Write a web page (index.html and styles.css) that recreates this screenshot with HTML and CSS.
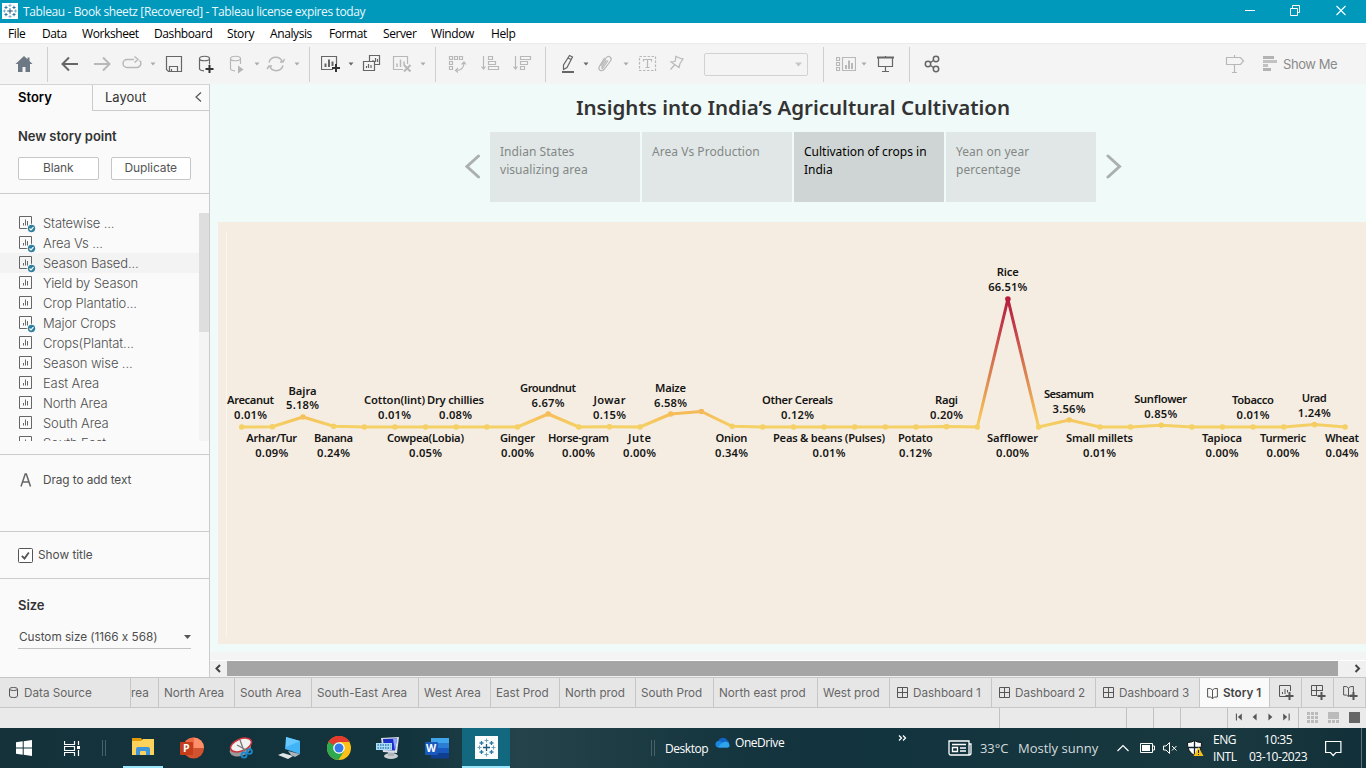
FILE: index.html
```html
<!DOCTYPE html>
<html lang="en">
<head>
<meta charset="utf-8">
<title>Tableau - Book sheetz</title>
<link rel="stylesheet" href="styles.css">
</head>
<body>
<svg class="defs" width="0" height="0">
  <defs>
    <g id="sheet"><path d="M.5.5h12v12H.5z" fill="none" stroke="#666" /><path d="M4.5 9.5V7M6.5 9.500V3.500M8.500 9.500V5" stroke="#666" fill="none"/></g>
    <g id="used"><circle cx="12.500" cy="12.500" r="4.200" fill="#2f7f9f" stroke="#fafafa"/><path d="M10.500 12.500l1.500 1.500 2.500-2.800" fill="none" stroke="#fff" stroke-width="1.200"/></g>
    <g id="dash"><path d="M.5.5h10v10H.5zM5.500.5v10M.5 5.500h10" fill="none" stroke="#555"/></g>
    <g id="book"><path d="M.6 1.500Q4 1 5.500 3 7 1 10.400 1.500V10Q7 9.500 5.500 11.500 4 9.500.6 10zM5.500 3v8.500" fill="none" stroke="#555"/></g>
    <path id="plus" d="M10.500 7v8M6.500 11h8" stroke="#555" stroke-width="2" fill="none"/>
    <g id="logo" fill="none" stroke-width="1.300">
      <path d="M10 6.500v7M6.500 10h7" stroke="#1f5a7c"/>
      <path d="M10 1v4M8 3h4M10 15v4M8 17h4M1 10h4M3 8v4M15 10h4M17 8v4" stroke="#6aa3bf" stroke-width="1"/>
      <path d="M5 3.500v4M3 5.500h4M15 3.500v4M13 5.500h4M5 12.500v4M3 14.500h4M15 12.500v4M13 14.500h4" stroke="#2c7ba5"/>
    </g>
  </defs>
</svg>

<header class="titlebar">
  <svg class="app-icon" width="16" height="16" viewBox="0 0 20 20"><path d="M0 0h20v20H0z" fill="#fff"/><use href="#logo"/></svg>
  <span>Tableau - Book sheetz [Recovered] - Tableau license expires today</span>
  <div class="win-buttons">
    <svg width="10" height="11" viewBox="0 0 10 11"><path d="M0 5.500h10" stroke="#fff"/></svg>
    <svg width="10" height="11" viewBox="0 0 10 11"><path d="M.5 3.500h7v7h-7zM2.500 3V.5h7v7H8" fill="none" stroke="#fff"/></svg>
    <svg width="10" height="11" viewBox="0 0 10 11"><path d="M.5 1l9 9M9.500 1l-9 9" stroke="#fff" stroke-width="1.100"/></svg>
  </div>
</header>

<nav class="menubar">
  <span class="m-file">File</span><span class="m-data">Data</span><span class="m-work">Worksheet</span><span class="m-dash">Dashboard</span><span class="m-story">Story</span><span class="m-ana">Analysis</span><span class="m-form">Format</span><span class="m-serv">Server</span><span class="m-wind">Window</span><span>Help</span>
</nav>

<div class="toolbar">
  <svg class="tool g14" viewBox="0 0 20 20"><path d="M10 2L1.500 10H4v8h4.500v-5h3v5H16v-8h2.500L15.500 7V3.500h-2v1.700z" fill="#6d7885"/></svg>
  <i class="sep g13"></i>
  <svg class="tool g12" viewBox="0 0 20 20"><path d="M18 10H3M9 3.500L2.500 10 9 16.500" class="dk w2"/></svg>
  <svg class="tool g12" viewBox="0 0 20 20"><path d="M2 10h15M11 3.500l6.500 6.500-6.500 6.500" class="lt w2"/></svg>
  <svg class="tool g10" viewBox="0 0 20 20"><path d="M12 5.500H5a4 4 0 0 0 0 8h10a4 4 0 0 0 2.500-7M12.500 2.500l3.500 3-3.500 3" class="lt w15"/></svg>
  <svg class="caret g8" viewBox="0 0 6 4"><path d="M.5.5h5L3 3.500z" fill="#aaa"/></svg>
  <svg class="tool g8" viewBox="0 0 20 20"><path d="M2.500 2.500h15v15H4.500l-2-2zM5.500 17v-4.500h8V17M7.500 17v-2" class="dk w12"/></svg>
  <svg class="tool g12" viewBox="0 0 20 20"><path d="M3.500 4.500v10q0 2 4.500 2.300M13.500 4.500V10.500M3.500 4.500c0-3 10-3 10 0s-10 3-10 0" class="dk w12"/><path d="M13.500 11v8M9.500 15h8" stroke="#333" stroke-width="2"/></svg>
  <svg class="tool g11" viewBox="0 0 20 20"><path d="M3.500 4.500v10q0 2 4.500 2.300M13.500 4.500V10M3.500 4.500c0-3 10-3 10 0s-10 3-10 0" class="lt w12"/><path d="M11 11.500v8l5.500-4z" fill="#b5b5b5"/></svg>
  <svg class="caret g7" viewBox="0 0 6 4"><path d="M.5.5h5L3 3.500z" fill="#aaa"/></svg>
  <svg class="tool g6" viewBox="0 0 20 20"><path d="M3 8.500a7 7 0 0 1 13.500 0M17 11.500a7 7 0 0 1-13.500 0M14 8h3l1.500-3M6 12H3l-2 3" class="lt w15"/></svg>
  <svg class="caret g8" viewBox="0 0 6 4"><path d="M.5.5h5L3 3.500z" fill="#aaa"/></svg>
  <i class="sep g9"></i>
  <svg class="tool g11" viewBox="0 0 20 20"><path d="M12 15.500H.5v-13h15V10" class="dk w12"/><path d="M4.500 13V9.500M8 13V5.500M11.500 12V7.500" class="dk w2"/><path d="M15 10v8M11 14h8" stroke="#333" stroke-width="2"/></svg>
  <svg class="caret g7" viewBox="0 0 6 4"><path d="M.5.5h5L3 3.500z" fill="#666"/></svg>
  <svg class="tool g8" viewBox="0 0 20 20"><path d="M7.500 7.500V1.500h10v9h-5M11 8V6M13.500 8V4M15.500 8V5M1.500 7.500h11v9h-11zM4.500 14v-2M6.500 14v-4M9 14v-3" class="dk w12"/></svg>
  <svg class="tool g10" viewBox="0 0 20 20"><path d="M11 15.500H1.500v-13h14V10" class="lt w12"/><path d="M5 13V9.500M8.500 13V5.500M12 11V7.500" class="lt w15"/><path d="M12 11l6.500 6.500M18.500 11L12 17.500" class="lt w2"/></svg>
  <svg class="caret g8" viewBox="0 0 6 4"><path d="M.5.5h5L3 3.500z" fill="#aaa"/></svg>
  <i class="sep g9"></i>
  <svg class="tool g12" viewBox="0 0 20 20"><path d="M1.500 2.500h3v3h-3zM6.500 2.500h3v3h-3zM11.500 2.500h3v3h-3zM1.500 7.500h3v3h-3zM1.500 12.500h3v3h-3zM16 8.500q0 8-8 8M13.500 10.500L16 8l2 2.500M10 14l-2.500 2.500 2.500 2" class="lt w12"/></svg>
  <svg class="tool g12" viewBox="0 0 20 20"><path d="M3.500 2v13M1.500 12.500l2 2.500 2-2.500M8.500 2.500h4v3h-4zM8.500 7.500h7v3h-7zM8.500 12.500h10v3h-10z" class="lt w12"/></svg>
  <svg class="tool g12" viewBox="0 0 20 20"><path d="M3.500 2v13M1.500 12.500l2 2.500 2-2.500M8.500 2.500h10v3h-10zM8.500 7.500h7v3h-7zM8.500 12.500h4v3h-4z" class="lt w12"/></svg>
  <i class="sep g13"></i>
  <svg class="tool g12" viewBox="0 0 20 20"><path d="M11.500 1.500l3 1.500-5.500 10.500-3.500 2V11zM10 4l3 1.500" class="dk w12"/><path d="M4 18h12" class="dk w2"/></svg>
  <svg class="caret g5" viewBox="0 0 6 4"><path d="M.5.5h5L3 3.500z" fill="#666"/></svg>
  <svg class="tool g6" viewBox="0 0 20 20"><path d="M6 12l5-8q2-2.500 4-1t.5 4L9 15.500q-2 2-4 .7t-.5-4L9.500 4M11.500 6L7 13q-.5 1.500.7 1.500L13 6.500" class="lt w12"/></svg>
  <svg class="caret g8" viewBox="0 0 6 4"><path d="M.5.5h5L3 3.500z" fill="#aaa"/></svg>
  <svg class="tool g9" viewBox="0 0 20 20"><path d="M1.500 2.500h16v14h-16z" class="lt w12" stroke-dasharray="2.500 1.500"/><path d="M5.500 7.500v-2h8v2M9.500 5.500v8M7.500 13.500h4" class="lt w12"/></svg>
  <svg class="tool g9" viewBox="0 0 20 20"><path d="M8 2.500l7 3M9 3.500L8 8l-4 .5 8 5.500 1-4 3-4.500-1-.5M7.500 11.500L3.500 16" class="lt w12" transform="translate(0 -.5)"/></svg>
  <div class="combo g17"><svg width="7" height="5" viewBox="0 0 7 5"><path d="M0 .5h7l-3.500 4z" fill="#c6c6c6"/></svg></div>
  <i class="sep g15"></i>
  <svg class="tool g12" viewBox="0 0 20 20"><path d="M.5 3.500h3v3h-3zM.5 8.500h3v3h-3zM.5 13.500h3v3h-3zM6.500 3.500h13v13h-13z" class="lt w12"/><path d="M10 15v-4M13 15V6.500M16 15V9" class="lt w2"/></svg>
  <svg class="caret g5" viewBox="0 0 6 4"><path d="M.5.5h5L3 3.500z" fill="#aaa"/></svg>
  <svg class="tool g9" viewBox="0 0 20 20"><path d="M1 3.500h17" class="dk w2"/><path d="M2.500 3.500v9h14v-9M9.500 12.500V17M6 17.500h7M9.500 2v1" class="dk w12"/></svg>
  <i class="sep g13"></i>
  <svg class="tool g12" viewBox="0 0 20 20"><circle cx="6" cy="10" r="2.700" class="dk w15"/><circle cx="14" cy="5" r="2.700" class="dk w15"/><circle cx="14" cy="15" r="2.700" class="dk w15"/><path d="M8.500 8.500l3-2M8.500 11.500l3 2" class="dk w15"/></svg>
  <svg class="tool push" viewBox="0 0 20 20"><path d="M1.500 3.500h14l3 3.500-3 3.500h-14zM9.500 1v2.500M9.500 10.500v8M7 18.500h5" class="lt w12"/></svg>
  <div class="showme"><svg width="15" height="16" viewBox="0 0 15 16"><path d="M0 0h11v3H0zM0 12h8v3H0z" fill="#b3b3b3"/><path d="M0 4h14v3H0zM0 8h5v3H0z" fill="#c2c2c2"/></svg><span>Show Me</span></div>
</div>

<main class="main">
  <aside class="side">
    <div class="tabs2"><b>Story</b><div class="lay"><span>Layout</span><svg width="7" height="10" viewBox="0 0 7 10"><path d="M6 .5L1 5l5 4.500" fill="none" stroke="#555" stroke-width="1.200"/></svg></div></div>
    <section class="newpoint">
      <h3>New story point</h3>
      <div class="btns"><button>Blank</button><button>Duplicate</button></div>
    </section>
    <section class="sheets">
      <ul>
        <li><svg class="si" viewBox="0 0 17 17"><use href="#sheet"/><use href="#used"/></svg>Statewise ...</li>
        <li><svg class="si" viewBox="0 0 17 17"><use href="#sheet"/><use href="#used"/></svg>Area Vs ...</li>
        <li class="hov"><svg class="si" viewBox="0 0 17 17"><use href="#sheet"/><use href="#used"/></svg>Season Based...</li>
        <li><svg class="si" viewBox="0 0 17 17"><use href="#sheet"/></svg>Yield by Season</li>
        <li><svg class="si" viewBox="0 0 17 17"><use href="#sheet"/></svg>Crop Plantatio...</li>
        <li><svg class="si" viewBox="0 0 17 17"><use href="#sheet"/><use href="#used"/></svg>Major Crops</li>
        <li><svg class="si" viewBox="0 0 17 17"><use href="#sheet"/></svg>Crops(Plantat...</li>
        <li><svg class="si" viewBox="0 0 17 17"><use href="#sheet"/></svg>Season wise ...</li>
        <li><svg class="si" viewBox="0 0 17 17"><use href="#sheet"/></svg>East Area</li>
        <li><svg class="si" viewBox="0 0 17 17"><use href="#sheet"/></svg>North Area</li>
        <li><svg class="si" viewBox="0 0 17 17"><use href="#sheet"/></svg>South Area</li>
        <li><svg class="si" viewBox="0 0 17 17"><use href="#sheet"/></svg>South East...</li>
      </ul>
      <div class="vbar"><div class="vthumb"></div></div>
    </section>
    <section class="addtext"><svg width="13" height="14" viewBox="0 0 13 14"><path d="M1 13.500L5.200 1h1.100l4.200 12.500M2.500 9h6.500" fill="none" stroke="#666" stroke-width="1.500"/></svg><span>Drag to add text</span></section>
    <section class="showtitle"><svg width="15" height="15" viewBox="0 0 15 15"><rect x=".5" y=".5" width="14" height="14" rx="1" fill="#fff" stroke="#555"/><path d="M3.800 7.800l2.700 2.700 4.300-6" fill="none" stroke="#555" stroke-width="1.800"/></svg><span>Show title</span></section>
    <section class="size"><h3>Size</h3><div class="sel"><span>Custom size (1166 x 568)</span><svg width="7" height="4" viewBox="0 0 7 4"><path d="M0 0h7L3.500 4z" fill="#555"/></svg></div></section>
  </aside>

  <div class="work">
    <div class="story">
      <h1>Insights into India’s Agricultural Cultivation</h1>
      <div class="nav">
        <svg width="17" height="26" viewBox="0 0 17 26"><path d="M14.500 2L3 12.500l11.500 10.500" fill="none" stroke="#abb0af" stroke-width="3" stroke-linecap="round"/></svg>
        <div class="caps"><div>Indian States visualizing area</div><div>Area Vs Production</div><div class="on">Cultivation of crops in India</div><div>Yean on year percentage</div></div>
        <svg width="17" height="26" viewBox="0 0 17 26"><path d="M3 2l11.500 10.500L3 23" fill="none" stroke="#abb0af" stroke-width="3" stroke-linecap="round"/></svg>
      </div>
      <svg class="chart" width="1148" height="422" viewBox="218 222 1148 422">
        <defs><linearGradient id="heat" gradientUnits="userSpaceOnUse" x1="0" y1="427" x2="0" y2="299"><stop offset="0" stop-color="#f4d166"/><stop offset=".1" stop-color="#f6bd58"/><stop offset=".3" stop-color="#e29855"/><stop offset=".5" stop-color="#d57450"/><stop offset=".75" stop-color="#c4404a"/><stop offset="1" stop-color="#b71d3e"/></linearGradient>
        <marker id="dot" viewBox="-3 -3 6 6" markerUnits="userSpaceOnUse" markerWidth="6" markerHeight="6"><circle r="2.800" fill="context-stroke"/></marker></defs>
        <path d="M218 222h1148v422H218z" fill="#f6ede2"/>
        <path d="M226.500 232v405" stroke="#faf5ef"/>
        <path fill="none" stroke="url(#heat)" stroke-width="3" stroke-linejoin="round" marker-start="url(#dot)" marker-mid="url(#dot)" marker-end="url(#dot)" d="M241.700 427L272.300 426.800 303 417 333.600 426.300 364.300 427 394.900 427 425.600 427 456.200 427 486.900 427 517.500 427 548.200 414 578.800 427 609.500 426.700 640.100 427 670.800 414 701.400 411.500 732.100 426.300 762.700 427 793.400 427 824 427 854.700 427 885.300 427 916 427 946.600 426.600 977.300 427 1007.900 299 1038.600 427 1069.200 420 1099.900 427 1130.500 427 1161.200 425.300 1191.800 427 1222.500 427 1253.100 427 1283.800 427 1314.400 424.600 1345.100 427"/>
        <g class="lab">
          <text x="250.500" y="404" textLength="47">Arecanut</text><text x="250.500" y="419" textLength="33">0.01%</text>
          <text x="271.700" y="442" textLength="51">Arhar/Tur</text><text x="271.700" y="457" textLength="33">0.09%</text>
          <text x="302.500" y="394.500" textLength="28">Bajra</text><text x="302.500" y="409" textLength="33">5.18%</text>
          <text x="333.500" y="442" textLength="39">Banana</text><text x="333.500" y="457" textLength="33">0.24%</text>
          <text x="394.500" y="404" textLength="61">Cotton(lint)</text><text x="394.500" y="419" textLength="33">0.01%</text>
          <text x="425.500" y="442" textLength="77">Cowpea(Lobia)</text><text x="425.500" y="457" textLength="33">0.05%</text>
          <text x="455.500" y="404" textLength="57">Dry chillies</text><text x="455.500" y="419" textLength="33">0.08%</text>
          <text x="517.500" y="442" textLength="35">Ginger</text><text x="517.500" y="457" textLength="33">0.00%</text>
          <text x="548" y="392" textLength="56">Groundnut</text><text x="548" y="407" textLength="33">6.67%</text>
          <text x="578.500" y="442" textLength="61">Horse-gram</text><text x="578.500" y="457" textLength="33">0.00%</text>
          <text x="609.500" y="404" textLength="32">Jowar</text><text x="609.500" y="419" textLength="33">0.15%</text>
          <text x="639.500" y="442" textLength="23">Jute</text><text x="639.500" y="457" textLength="33">0.00%</text>
          <text x="670.500" y="392" textLength="31">Maize</text><text x="670.500" y="407" textLength="33">6.58%</text>
          <text x="731.500" y="442" textLength="32">Onion</text><text x="731.500" y="457" textLength="33">0.34%</text>
          <text x="797.500" y="404" textLength="71">Other Cereals</text><text x="797.500" y="419" textLength="33">0.12%</text>
          <text x="829" y="442" textLength="112">Peas &amp; beans (Pulses)</text><text x="829" y="457" textLength="33">0.01%</text>
          <text x="915.500" y="442" textLength="35">Potato</text><text x="915.500" y="457" textLength="33">0.12%</text>
          <text x="946.500" y="404" textLength="23">Ragi</text><text x="946.500" y="419" textLength="33">0.20%</text>
          <text x="1007.700" y="276" textLength="22">Rice</text><text x="1007.700" y="291" textLength="39">66.51%</text>
          <text x="1012.500" y="442" textLength="51">Safflower</text><text x="1012.500" y="457" textLength="33">0.00%</text>
          <text x="1069" y="398" textLength="50">Sesamum</text><text x="1069" y="413" textLength="33">3.56%</text>
          <text x="1099.500" y="442" textLength="67">Small millets</text><text x="1099.500" y="457" textLength="33">0.01%</text>
          <text x="1160.700" y="403" textLength="53">Sunflower</text><text x="1160.700" y="418" textLength="33">0.85%</text>
          <text x="1222" y="442" textLength="40">Tapioca</text><text x="1222" y="457" textLength="33">0.00%</text>
          <text x="1253" y="404" textLength="42">Tobacco</text><text x="1253" y="419" textLength="33">0.01%</text>
          <text x="1283" y="442" textLength="46">Turmeric</text><text x="1283" y="457" textLength="33">0.00%</text>
          <text x="1314.300" y="402" textLength="25">Urad</text><text x="1314.300" y="417" textLength="33">1.24%</text>
          <text x="1342" y="442" textLength="34">Wheat</text><text x="1342" y="457" textLength="33">0.04%</text>
        </g>
      </svg>
    </div>
    <div class="hbar">
      <svg width="17" height="15" viewBox="0 0 17 15"><path d="M10 4L6.500 7.500 10 11" fill="none" stroke="#444" stroke-width="2"/></svg>
      <div class="hthumb"></div>
      <svg width="28" height="15" viewBox="0 0 28 15"><path d="M17.500 4L21 7.500 17.500 11" fill="none" stroke="#444" stroke-width="2"/></svg>
    </div>
  </div>
</main>

<nav class="sheettabs">
  <div class="t1"><svg width="9" height="11" viewBox="0 0 9 11"><path d="M.5 2v7c0 2 8 2 8 0V2M.5 2c0-2 8-2 8 0s-8 2-8 0" fill="none" stroke="#555"/></svg>Data Source</div>
  <div class="t2">rea</div><div class="t3">North Area</div><div class="t4">South Area</div><div class="t5">South-East Area</div><div class="t6">West Area</div><div class="t7">East Prod</div><div class="t8">North prod</div><div class="t9">South Prod</div><div class="t10">North east prod</div><div class="t11">West prod</div>
  <div class="t12"><svg class="ti" viewBox="0 0 11 12"><use href="#dash"/></svg>Dashboard 1</div>
  <div class="t13"><svg class="ti" viewBox="0 0 11 12"><use href="#dash"/></svg>Dashboard 2</div>
  <div class="t13"><svg class="ti" viewBox="0 0 11 12"><use href="#dash"/></svg>Dashboard 3</div>
  <div class="t14"><svg class="ti" viewBox="0 0 11 12"><use href="#book"/></svg>Story 1</div>
  <div class="tn"><svg width="16" height="16" viewBox="0 0 16 16"><path d="M7 11.500H.5V.5h11V6M3.500 9V7M6 9V4M8.500 7.500V5" fill="none" stroke="#555"/><use href="#plus"/></svg></div>
  <div class="tn"><svg width="16" height="16" viewBox="0 0 16 16"><path d="M6 10.500H.5V.5h11V6M5.500.5v10M.5 5.500h11" fill="none" stroke="#555"/><use href="#plus"/></svg></div>
  <div class="tn"><svg width="16" height="16" viewBox="0 0 16 16"><use href="#book"/><use href="#plus"/></svg></div>
</nav>

<div class="status">
  <i class="s1"></i><i class="s2"></i><i class="s3"></i><i class="s3"></i><i class="s4"></i>
  <svg class="s5" width="71" height="20" viewBox="1228 708 71 20"><path d="M1236.500 713.500v7M1290 713.500v7" stroke="#444"/><path d="M1242 713.500v7l-4-3.500zM1257 713.500v7l-4-3.500zM1269 713.500v7l4-3.500zM1284 713.500v7l4-3.500z" fill="#555"/></svg>
  <svg width="66" height="20" viewBox="1299 708 66 20"><path d="M1307 712h3v3h-3zm4 0h3v3h-3zm4 0h3v3h-3zm-8 4h3v3h-3zm4 0h3v3h-3zm4 0h3v3h-3zm-8 4h3v3h-3zm4 0h3v3h-3zm4 0h3v3h-3zM1328 712h11v7h-11zm0 8h3v3h-3zm4 0h3v3h-3zm4 0h3v3h-3z" fill="#bbb"/><path d="M1349 712h11v11h-11z" fill="#666"/></svg>
</div>

<footer class="taskbar">
  <div class="b-start"><svg width="16" height="16" viewBox="0 0 16 16"><path d="M0 2.300L6.700 1.300v6.200H0zM7.700 1.200L16 0v7.500H7.700zM0 8.500h6.700v6.200L0 13.700zM7.700 8.500H16V16l-8.300-1.200z" fill="#fff"/></svg></div>
  <div class="b-view"><svg width="16" height="15" viewBox="0 0 16 15"><path d="M.5 0v3.500h10V0M.5 15v-3.500h10V15M.5 5.500h10v4H.5zM14.500 0v4M14.500 9v6" fill="none" stroke="#fff" stroke-width="1.200"/><path d="M13 5h3v3h-3z" fill="#fff"/></svg></div>
  <div class="grip g-a"></div>
  <div class="b-app b-exp"><svg width="22" height="20" viewBox="0 0 22 20"><path d="M0 1h9l2 3H0z" fill="#e29a0b"/><path d="M0 4h9l2-2h11v16H0z" fill="#fbd35c"/><path d="M4 18v-6q0-2 2-2h10q2 0 2 2v6h-4v-3q0-1-1-1H9q-1 0-1 1v3z" fill="#3e95dc"/></svg></div>
  <div class="b-app b-ppt"><svg width="24" height="22" viewBox="0 0 24 22"><circle cx="13.500" cy="11" r="10.500" fill="#d35230"/><path d="M13.500.5A10.500 10.500 0 0 1 24 11H13.500z" fill="#ff8f6b"/><path d="M13.500.5A10.500 10.500 0 0 0 3 11h10.500z" fill="#ed6c47"/><rect y="5" width="13" height="13" rx="1" fill="#c43e1c"/><text x="3" y="15" class="appletter">P</text></svg></div>
  <div class="b-app b-snip"><svg width="24" height="22" viewBox="0 0 24 22"><ellipse cx="11" cy="12" rx="11" ry="7" transform="rotate(-20 11 11)" fill="#999"/><ellipse cx="12" cy="8" rx="11" ry="6" transform="rotate(-22 12 8)" fill="#f1f1f1" stroke="#c9363d" stroke-width="1.500"/><path d="M11 3l4 11M8 8l9 5" stroke="#777" stroke-width="1.300"/><circle cx="15" cy="18" r="2.600" fill="none" stroke="#1789d0" stroke-width="1.800"/><circle cx="20.500" cy="14.500" r="2.400" fill="none" stroke="#1789d0" stroke-width="1.800"/></svg></div>
  <div class="b-app b-pc"><svg width="24" height="22" viewBox="0 0 24 22"><path d="M8 0l14 4v13L7 12z" fill="#42b4f5"/><path d="M8 0l14 4-14 6z" fill="#67c8ff"/><path d="M10 14l12 3-5 3-4-2z" fill="#aab4bb"/><path d="M0 18l5-2 10 3-5 3z" fill="#dfe4e7"/></svg></div>
  <div class="b-app b-chr"><svg width="24" height="24" viewBox="0 0 24 24"><circle cx="12" cy="12" r="12" fill="#fbc116"/><path d="M12 12L1.600 6A12 12 0 0 1 22.400 6z" fill="#e33b2e"/><path d="M12 12L1.600 6A12 12 0 0 0 11.500 24L17.200 15z" fill="#2da94f"/><path d="M12 6h10.400L17 15z" fill="#fbc116"/><path d="M12 6.500L1.600 6 6.800 15z" fill="#2da94f"/><path d="M1.600 6A12 12 0 0 1 22.400 6H12a6 6 0 0 0-5.200 3z" fill="#e33b2e"/><circle cx="12" cy="12" r="5.800" fill="#fff"/><circle cx="12" cy="12" r="4.500" fill="#3478eb"/></svg></div>
  <div class="b-app b-rd"><svg width="24" height="24" viewBox="0 0 24 24"><ellipse cx="15" cy="20" rx="7" ry="3" fill="#c9ced1"/><path d="M12 16h6v4h-6z" fill="#aeb5ba"/><path d="M5 2l18-1-2 16-14-1z" fill="#dcdfe6"/><path d="M7 3l14-.5-2 12-11-.5z" fill="#1c2fc8"/><path d="M17 3h4l-2 11.500z" fill="#8aa6ff"/><path d="M0 7h16v7H0z" fill="#a9dcf7"/><path d="M1.500 9h13M1.500 12h13" stroke="#3a7cb5" stroke-width="1.500" stroke-dasharray="1.500 1"/></svg></div>
  <div class="b-app b-word"><svg width="24" height="22" viewBox="0 0 24 22"><path d="M6 1h18v5.500H6z" fill="#41a5ee"/><path d="M6 6h18v5.500H6z" fill="#2b7cd3"/><path d="M6 11h18v5.500H6z" fill="#185abd"/><path d="M6 16h18v5.500H6z" fill="#103f91"/><rect y="5" width="13" height="13" rx="1" fill="#185abd"/><text x="1" y="15" class="appletter">W</text></svg></div>
  <div class="b-tab"><svg width="23" height="23" viewBox="-1.500 -1.500 23 23"><path d="M-1.500-1.500h23v23h-23z" fill="#fbfdfd"/><use href="#logo"/></svg></div>
  <div class="grip g-b"></div>
  <span class="desk">Desktop</span>
  <svg class="od" width="16" height="11" viewBox="0 0 16 11"><path d="M3 5a5 5 0 0 1 9-2 4 4 0 0 1 2 3L8 8z" fill="#0f66c4"/><path d="M3.500 10.500a3.300 3.300 0 0 1-.5-6.500q2 0 3 .8L15 9a3 3 0 0 1-2 1.500z" fill="#1a86dd"/><path d="M3 10q5-6 9-5a3 3 0 0 1 1 5.500H4z" fill="#2fa4ee"/></svg>
  <span class="odt">OneDrive</span>
  <svg class="more" width="9" height="6" viewBox="0 0 9 6"><path d="M1 .5L3.500 3 1 5.500M5 .5L7.500 3 5 5.500" fill="none" stroke="#fff" stroke-width="1.300"/></svg>
  <svg class="news" width="24" height="16" viewBox="0 0 24 16"><path d="M1 1h20v14H3q-2 0-2-2zM21 4h2v9q0 2-2 2M4 4.500h14M12 8h6M12 11h6M4.500 7.500h5v4h-5z" fill="none" stroke="#fff" stroke-width="1.300"/></svg>
  <span class="temp">33°C</span><span class="sunny">Mostly sunny</span>
  <svg class="chev" width="12" height="8" viewBox="0 0 12 8"><path d="M.5 7L6 1.500 11.500 7" fill="none" stroke="#fff" stroke-width="1.200"/></svg>
  <svg class="bat" width="15" height="10" viewBox="0 0 15 10"><path d="M.5.5h12v9H.5zM13 3h1.500v4H13" fill="none" stroke="#fff"/><path d="M2 2h8v6H2z" fill="#fff"/></svg>
  <svg class="mute" width="15" height="12" viewBox="0 0 15 12"><path d="M.5 4v4h2.500l3.500 3.500V.5L3 4zM9 4l4.500 4.500M13.500 4L9 8.500" fill="none" stroke="#fff"/></svg>
  <svg class="shield" width="17" height="17" viewBox="0 0 17 17"><path d="M.5 2.500Q5 2.500 7.500.5 10 2.500 14.500 2.500q.5 9-7 13-7.500-4-7-13z" fill="#fff" stroke="#111"/><path d="M7.500 1v14M1 7.500h13" stroke="#123" stroke-width="1.300"/><path d="M11.500 7l5 9h-10z" fill="#f6c01b"/><path d="M11.500 10v3M11.500 14v1" stroke="#222"/></svg>
  <div class="lang"><span>ENG</span><span>INTL</span></div>
  <div class="clock"><span>10:35</span><span>03-10-2023</span></div>
  <svg class="notif" width="17" height="17" viewBox="0 0 17 17"><path d="M.6 1.500h15.300v11h-5l-2.700 3-2.700-3H.6z" fill="none" stroke="#fff" stroke-width="1.200"/></svg>
  <div class="peek"></div>
</footer>
</body>
</html>
```

FILE: styles.css
```css
* { box-sizing: border-box; }
body { margin: 0; width: 1366px; height: 768px; overflow: hidden; display: flex; flex-direction: column; background: #f4f4f4; font-family: "Inter", "Open Sans", sans-serif; color: #4e4e4e; }
svg { display: block; flex: none; }
.defs { position: absolute; }
h1, h3, ul { margin: 0; padding: 0; }

.titlebar { height: 23px; flex: none; background: #0099bc; color: #e9f7fb; display: flex; align-items: center; font: 12px "Open Sans", sans-serif; letter-spacing: -.38px; }
.app-icon { margin: 0 5px 1px 2px; }
.win-buttons { margin: 0 20px 3px auto; display: flex; gap: 35px; }
.win-buttons svg:last-child { margin-left: 1px; }

.menubar { height: 20px; flex: none; background: #fff; color: #000; padding-left: 8px; display: flex; align-items: center; font: 12px "Open Sans", sans-serif; letter-spacing: -.4px; white-space: nowrap; }
.menubar span { flex: none; }
.m-file { width: 34px; }
.m-data { width: 40px; }
.m-work { width: 72px; }
.m-dash { width: 73px; }
.m-story { width: 43px; }
.m-ana { width: 59px; }
.m-form { width: 54px; }
.m-serv { width: 48px; }
.m-wind { width: 60px; }

.toolbar { height: 41px; flex: none; background: #f4f4f4; border-top: 1px solid #ebebeb; display: flex; align-items: center; }
.tool { width: 20px; height: 20px; }
.caret { width: 6px; height: 4px; }
.sep { width: 1px; height: 35px; background: #cfcfcf; flex: none; }
.dk, .lt { fill: none; stroke: #666; stroke-width: 1; }
.lt { stroke: #b8b8b8; }
.w12 { stroke-width: 1.200; }
.w15 { stroke-width: 1.500; }
.w2 { stroke-width: 2; }
.g5 { margin-left: 5px; }
.g6 { margin-left: 6px; }
.g7 { margin-left: 7px; }
.g8 { margin-left: 8px; }
.g9 { margin-left: 9px; }
.g10 { margin-left: 10px; }
.g11 { margin-left: 11px; }
.g12 { margin-left: 12px; }
.g13 { margin-left: 13px; }
.g14 { margin-left: 14px; }
.g15 { margin-left: 15px; }
.g17 { margin-left: 17px; }
.combo { width: 104px; height: 23px; flex: none; border: 1px solid #d2d2d2; border-radius: 2px; display: flex; align-items: center; justify-content: flex-end; padding-right: 5px; }
.push { margin-left: auto; }
.showme { width: 103px; margin-left: 18px; display: flex; gap: 5px; align-items: center; color: #8a8a8a; font-size: 13px; letter-spacing: -.42px; }

.main { height: 593px; flex: none; display: flex; }
.side { width: 210px; flex: none; background: #fafafa; border-right: 1px solid #cbcbcb; border-top: 1px solid #d4d4d4; display: flex; flex-direction: column; font-size: 11.800px; }
.tabs2 { height: 26px; display: flex; flex: none; font-size: 13px; }
.tabs2 b { width: 92px; padding: 4px 0 0 18px; line-height: 16px; color: #000; font-weight: 600; }
.lay { flex: 1; border-left: 1px solid #cbcbcb; border-bottom: 1px solid #cbcbcb; display: flex; justify-content: space-between; align-items: center; padding: 0 7px 1px 12px; color: #333; }
.side h3 { font-size: 13px; line-height: 16px; color: #333; font-weight: 600; letter-spacing: -.05px; }
.newpoint { height: 83px; flex: none; padding: 17px 18px 0; border-bottom: 1px solid #cbcbcb; }
.btns { display: flex; gap: 12px; margin-top: 13px; }
.btns button { flex: 1; height: 23px; padding: 0 0 2px; background: #fff; border: 1px solid #c6c6c6; border-radius: 2px; font: 12px "Inter", sans-serif; letter-spacing: -.1px; color: #555; }
.sheets { height: 261px; flex: none; border-bottom: 1px solid #cbcbcb; padding-top: 19px; display: flex; }
.sheets ul { list-style: none; width: 199px; height: 228px; overflow: hidden; }
.sheets li { height: 20px; display: flex; align-items: center; gap: 7px; padding-left: 19px; font-size: 13px; letter-spacing: -.12px; font-weight: 350; }
.si { width: 17px; height: 17px; margin-top: 3px; }
.hov { background: #f3f3f3; }
.vbar { width: 10px; height: 228px; background: #f4f4f4; }
.vthumb { height: 119px; background: #dedede; }
.addtext { height: 77px; flex: none; border-bottom: 1px solid #cbcbcb; padding: 16px 0 0 20px; display: flex; gap: 10px; line-height: 18px; letter-spacing: -.08px; }
.addtext svg { margin-top: 2px; }
.showtitle { height: 47px; flex: none; border-bottom: 1px solid #cbcbcb; padding-left: 18px; display: flex; gap: 5px; align-items: center; }
.size { padding: 18px 18px 0; }
.sel { border-bottom: 1px solid #c2c2c2; height: 19px; margin-top: 17px; display: flex; justify-content: space-between; align-items: center; padding-left: 1px; width: 173px; }
.sel span { padding-bottom: 5px; letter-spacing: -.05px; }
.sel svg { margin-bottom: 5px; }

.work { flex: 1; min-width: 0; display: flex; flex-direction: column; }
.story { height: 568px; background: #f0faf9; display: flex; flex-direction: column; align-items: flex-end; }
.story h1 { width: 1146px; text-align: center; font: 600 20.500px/28px "Noto Sans", sans-serif; color: #333; margin: 9px 0 11px; }
.nav { width: 1146px; height: 70px; display: flex; justify-content: center; align-items: center; gap: 9px; }
.caps { display: flex; gap: 2px; }
.caps div { width: 150px; height: 70px; padding: 11px 10px; background: #e1e7e6; color: #838787; font: 12px/18px "Noto Sans", sans-serif; letter-spacing: .05px; }
.caps .on { background: #cfd5d4; color: #000; padding-right: 5px; letter-spacing: 0; }
.chart { margin-top: 20px; }
.lab { font: 650 11.200px "Noto Sans", sans-serif; fill: #151515; text-anchor: middle; }
.hbar { height: 17px; margin-top: 8px; border-top: 1px solid #fff; background: #f0f0f0; display: flex; }
.hthumb { flex: 1; height: 15px; background: #a5a5a5; }

.sheettabs { height: 31px; flex: none; border-top: 1px solid #c6c6c6; border-bottom: 1px solid #c6c6c6; background: #e6e6e6; display: flex; font-size: 11.700px; color: #666; white-space: nowrap; overflow: hidden; }
.sheettabs div { border-right: 1px solid #c6c6c6; padding-left: 5px; display: flex; align-items: center; flex: none; overflow: hidden; }
.sheettabs .t1 { width: 131px; padding-left: 9px; gap: 6px; }
.sheettabs .t2 { width: 28px; padding-left: 0; }
.t3 { width: 76px; }
.t4 { width: 77px; }
.t5 { width: 107px; }
.t6 { width: 72px; }
.t7 { width: 69px; }
.t8 { width: 76px; }
.t9 { width: 78px; }
.t10 { width: 104px; }
.t11 { width: 72px; }
.sheettabs .t12, .sheettabs .t13 { width: 102px; padding-left: 7px; gap: 5px; letter-spacing: -.05px; }
.sheettabs .t13 { width: 104px; }
.sheettabs .t14 { width: 70px; padding-left: 7px; gap: 5px; background: #fafafa; color: #444; font-weight: 600; }
.ti { width: 11px; height: 12px; }
.sheettabs .tn { width: 32px; padding-left: 9px; }

.status { height: 20px; flex: none; background: #eaeaea; display: flex; }
.status i, .s5 { border-right: 1px solid #c2c2c2; }
.s1 { width: 1000px; }
.s2 { width: 127px; }
.s3 { width: 27px; }
.s4 { width: 47px; }

.taskbar { height: 40px; flex: none; background: linear-gradient(90deg, #15323b, #12343d 30%, #24434a 38%, #14343e 55%, #12343e 65%, #19383f 90%, #112f38); display: flex; align-items: center; color: #fff; font: 12px "Open Sans", sans-serif; letter-spacing: -.45px; white-space: nowrap; }
.b-start { margin-left: 16px; }
.b-view { margin-left: 32px; }
.grip { width: 4px; height: 16px; border: 1px solid #48626a; border-width: 0 1px; }
.g-a { margin-left: 22px; }
.g-b { margin-left: 141px; }
.b-app { width: 40px; height: 40px; display: flex; align-items: center; justify-content: center; margin-left: 9px; }
.b-exp { margin-left: 17px; border-bottom: 2px solid #9be5fb; }
.b-tab { width: 48px; height: 40px; margin-left: 5px; background: #12687e; border-bottom: 2px solid #9be5fb; display: flex; align-items: center; justify-content: center; }
.appletter { font: 700 10.500px "Open Sans", sans-serif; fill: #fff; }
.desk { width: 42px; margin-left: 10px; }
.od { margin: 0 4px 11px 8px; }
.odt { width: 49px; margin-bottom: 11px; }
.more { margin: 0 0 21px 114px; }
.news { margin-left: 41px; }
.temp { width: 38px; margin-left: 8px; font-size: 13px; letter-spacing: -.1px; color: #d5dcde; }
.sunny { width: 80px; font-size: 13px; letter-spacing: 0; color: #d5dcde; }
.chev { margin-left: 19px; }
.bat { margin-left: 11px; }
.mute { margin-left: 8px; }
.shield { margin-left: 9px; }
.lang, .clock { display: flex; flex-direction: column; line-height: 17px; }
.lang { width: 24px; margin-left: 9px; }
.clock { width: 58px; margin-left: 12px; align-items: center; }
.notif { margin-left: 18px; }
.peek { width: 1px; height: 40px; margin-left: 19px; background: #5d7379; }
```
